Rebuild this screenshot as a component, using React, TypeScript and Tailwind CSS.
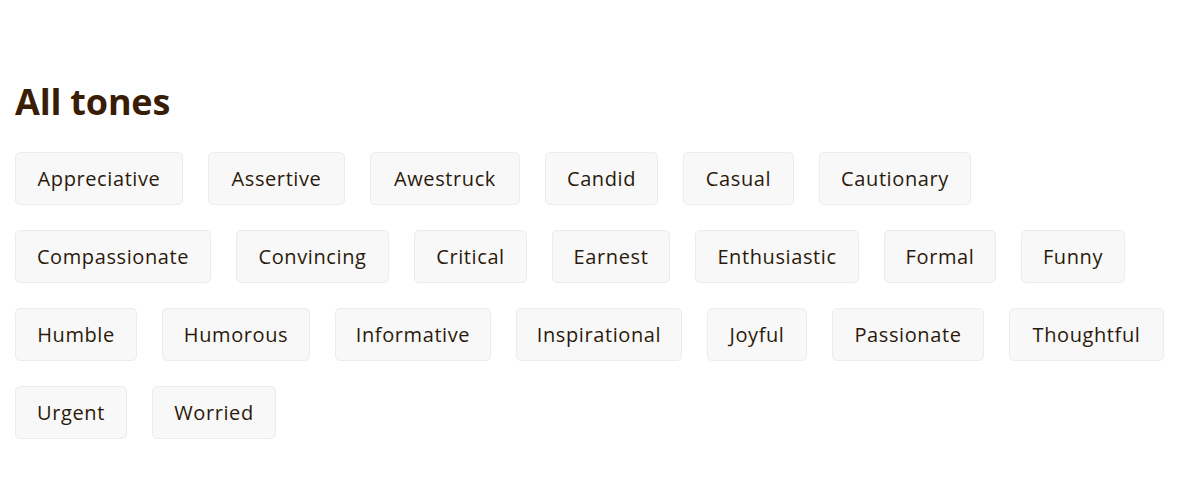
// chip widths taken from the design so the rows wrap where they should
const tones: { label: string; width: string }[] = [
	{ label: "Appreciative", width: "w-[168px]" },
	{ label: "Assertive", width: "w-[137px]" },
	{ label: "Awestruck", width: "w-[150px]" },
	{ label: "Candid", width: "w-[113px]" },
	{ label: "Casual", width: "w-[111px]" },
	{ label: "Cautionary", width: "w-[152px]" },
	{ label: "Compassionate", width: "w-[196px]" },
	{ label: "Convincing", width: "w-[153px]" },
	{ label: "Critical", width: "w-[113px]" },
	{ label: "Earnest", width: "w-[118px]" },
	{ label: "Enthusiastic", width: "w-[164px]" },
	{ label: "Formal", width: "w-[112px]" },
	{ label: "Funny", width: "w-[104px]" },
	{ label: "Humble", width: "w-[122px]" },
	{ label: "Humorous", width: "w-[148px]" },
	{ label: "Informative", width: "w-[156px]" },
	{ label: "Inspirational", width: "w-[166px]" },
	{ label: "Joyful", width: "w-[100px]" },
	{ label: "Passionate", width: "w-[152px]" },
	{ label: "Thoughtful", width: "w-[155px]" },
	{ label: "Urgent", width: "w-[112px]" },
	{ label: "Worried", width: "w-[124px]" },
];

const App = () => {
	return (
		<div className="min-h-[502px] bg-white px-[15px] pt-[78px] font-['Open_Sans',sans-serif]">
			<h2 className="text-[36px] font-bold leading-[48px] tracking-[-0.2px] text-[#3a1d05]">
				All tones
			</h2>
			<div className="mt-[26px] flex max-w-[1160px] flex-wrap gap-[25px]">
				{tones.map((tone) => (
					<button
						key={tone.label}
						className={`${tone.width} h-[53px] rounded-[5px] border border-[#ececec] bg-[#f8f8f8] text-center text-[20px] tracking-[0.6px] text-[#2b1a0b]`}
					>
						{tone.label}
					</button>
				))}
			</div>
		</div>
	);
};

export default App;
